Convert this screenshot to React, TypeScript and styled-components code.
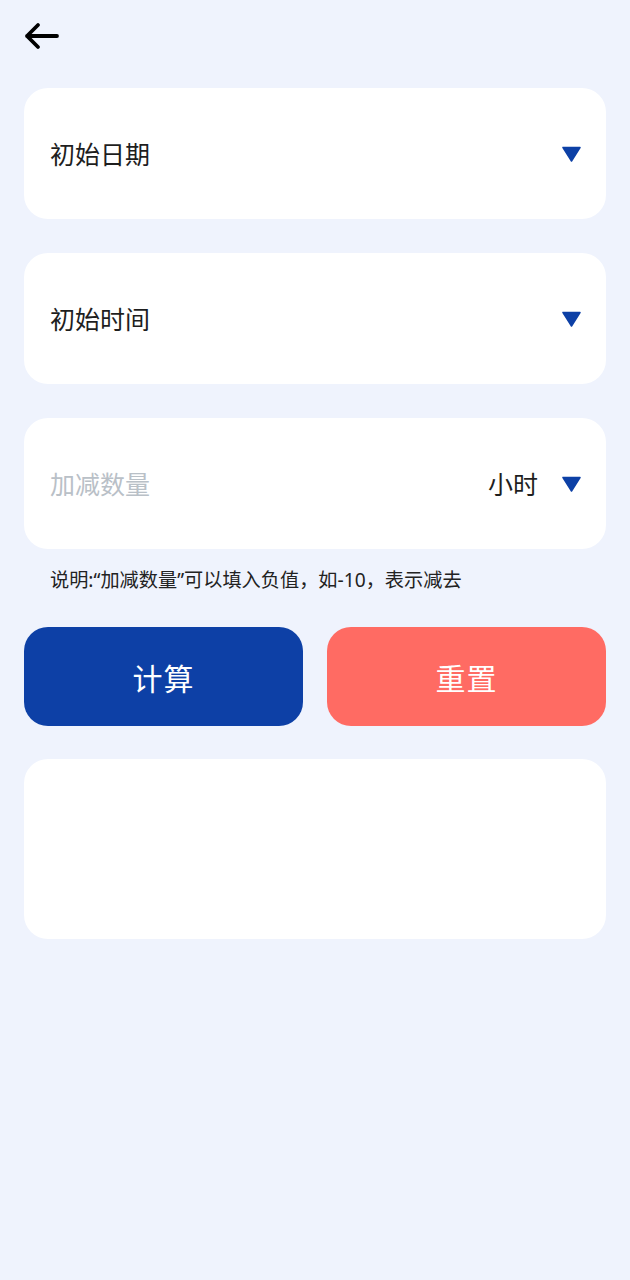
import React from "react";
import styled, { createGlobalStyle } from "styled-components";

const Global = createGlobalStyle`
  html, body { margin: 0; padding: 0; background: #eff3fd; }
  body { font-family: "Noto Sans CJK SC", "Noto Sans", sans-serif; }
  * { box-sizing: border-box; }
`;

const Page = styled.div`
  min-height: 1280px;
  background: #eff3fd;
  padding: 0 24px;
  display: flex;
  flex-direction: column;
`;

const Header = styled.div`
  height: 72px;
  display: flex;
  align-items: center;
`;

const BackButton = styled.button`
  border: none;
  background: transparent;
  padding: 0;
  width: 36px;
  height: 30px;
  display: flex;
  align-items: center;
  cursor: pointer;
`;

const Cards = styled.div`
  margin-top: 16px;
  display: flex;
  flex-direction: column;
  gap: 34px;
`;

const Card = styled.div`
  height: 131px;
  background: #ffffff;
  border-radius: 24px;
  display: flex;
  align-items: center;
  padding: 0 25px 0 26px;
`;

const Label = styled.div<{ $placeholder?: boolean }>`
  flex: 1;
  font-size: 25px;
  line-height: 32px;
  margin-top: -2px;
  color: ${(p) => (p.$placeholder ? "#b9c0c7" : "#1e1e1e")};
`;

const Unit = styled.div`
  font-size: 25px;
  line-height: 32px;
  margin-top: -2px;
  color: #1e1e1e;
  margin-right: 24px;
`;

const Note = styled.div`
  margin: 19px 0 0 26px;
  font-family: "Noto Sans", "Noto Sans CJK SC", sans-serif;
  font-size: 19.2px;
  line-height: 24px;
  color: #222;
`;

const Buttons = styled.div`
  margin-top: 35px;
  display: grid;
  grid-template-columns: 1fr 1fr;
  gap: 24px;
`;

const ActionButton = styled.button<{ $bg: string }>`
  height: 99px;
  border: none;
  border-radius: 24px;
  background: ${(p) => p.$bg};
  color: #ffffff;
  font-family: "Noto Sans CJK SC", "Noto Sans", sans-serif;
  font-size: 30px;
  letter-spacing: 1px;
  cursor: pointer;
`;

const ResultCard = styled.div`
  margin-top: 33px;
  height: 180px;
  background: #ffffff;
  border-radius: 24px;
`;

const Caret = () => (
  <svg width="19" height="16" viewBox="0 0 19 16">
    <path d="M1 1.5 L18 1.5 L9.5 15 Z" fill="#0d40a6" stroke="#0d40a6" strokeWidth="1.5" strokeLinejoin="round" />
  </svg>
);

const BackArrow = () => (
  <svg width="36" height="30" viewBox="0 0 36 30">
    <path d="M3 15 H33 M14 4 L3 15 L14 26" fill="none" stroke="#000" strokeWidth="3.8" strokeLinecap="round" strokeLinejoin="round" />
  </svg>
);

export default function App() {
  return (
    <>
      <Global />
      <Page>
        <Header>
          <BackButton aria-label="back">
            <BackArrow />
          </BackButton>
        </Header>
        <Cards>
          <Card>
            <Label>初始日期</Label>
            <Caret />
          </Card>
          <Card>
            <Label>初始时间</Label>
            <Caret />
          </Card>
          <Card>
            <Label $placeholder>加减数量</Label>
            <Unit>小时</Unit>
            <Caret />
          </Card>
        </Cards>
        <Note>说明:“加减数量”可以填入负值，如-10，表示减去</Note>
        <Buttons>
          <ActionButton $bg="#0d40a6">计算</ActionButton>
          <ActionButton $bg="#ff6b63">重置</ActionButton>
        </Buttons>
        <ResultCard />
      </Page>
    </>
  );
}
